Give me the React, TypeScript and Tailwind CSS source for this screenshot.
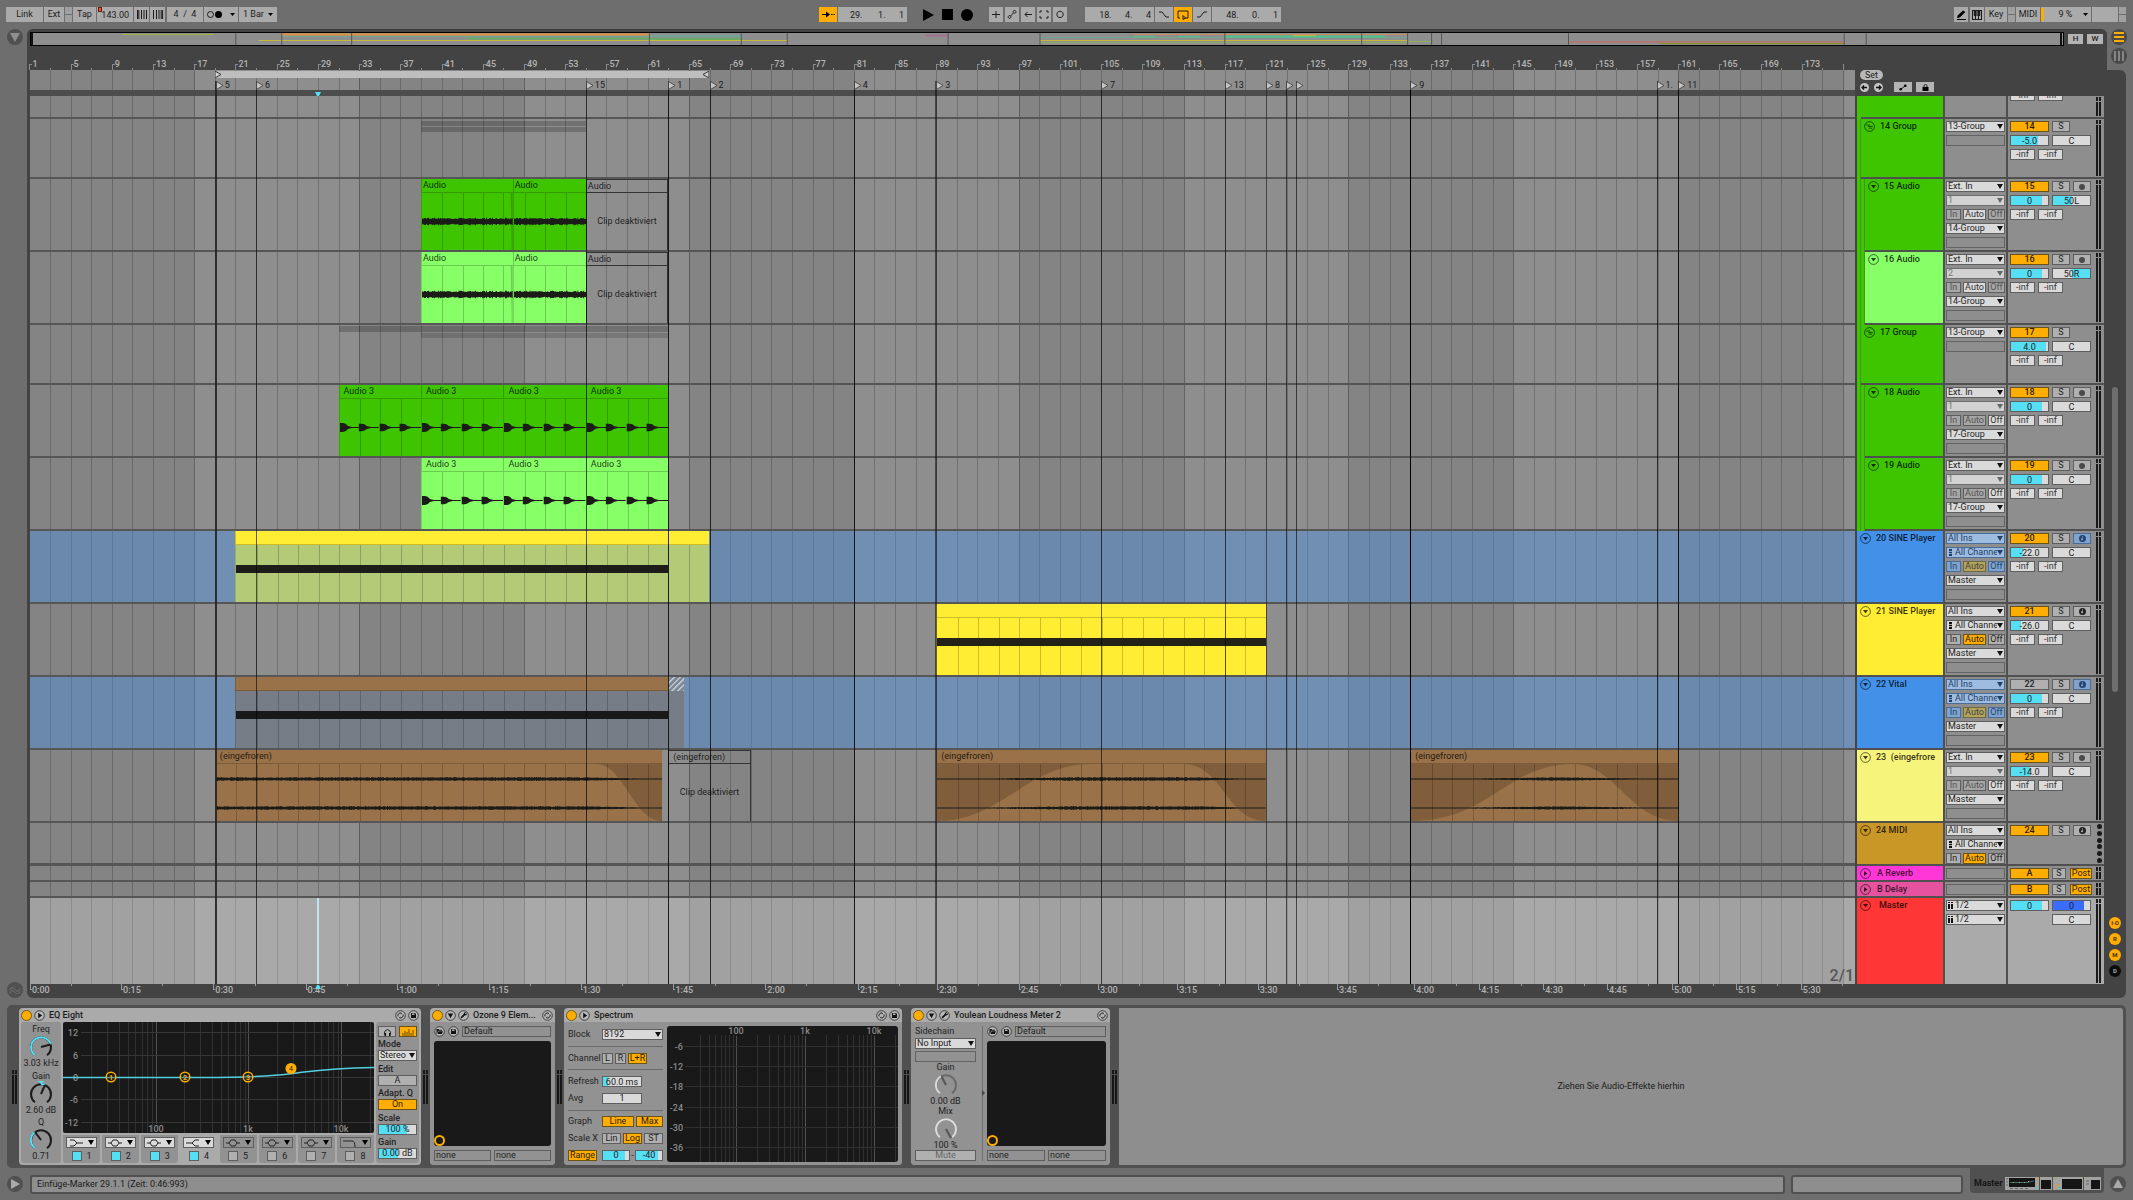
import type { ReactNode } from 'react';
import clsx from 'clsx';

const BARS = 177.1;
const at = (bar: number) => `${((bar - 1.06) / BARS) * 100}%`;
const span = (bars: number) => `${(bars / BARS) * 100}%`;

// the tempo changes along the song, so the seconds are not evenly spaced
const times = [
  { label: '0:00', bar: 1.06 },
  { label: '0:15', bar: 9.9 },
  { label: '0:30', bar: 18.85 },
  { label: '0:45', bar: 27.8 },
  { label: '1:00', bar: 36.7 },
  { label: '1:15', bar: 45.6 },
  { label: '1:30', bar: 54.5 },
  { label: '1:45', bar: 63.5 },
  { label: '2:00', bar: 72.4 },
  { label: '2:15', bar: 81.4 },
  { label: '2:30', bar: 89.1 },
  { label: '2:45', bar: 97 },
  { label: '3:00', bar: 104.7 },
  { label: '3:15', bar: 112.4 },
  { label: '3:30', bar: 120.2 },
  { label: '3:45', bar: 127.9 },
  { label: '4:00', bar: 135.4 },
  { label: '4:15', bar: 141.7 },
  { label: '4:30', bar: 147.9 },
  { label: '4:45', bar: 154.1 },
  { label: '5:00', bar: 160.4 },
  { label: '5:15', bar: 166.6 },
  { label: '5:30', bar: 172.9 },
];

const locators = [
  { bar: 19, label: '5', line: 'w-[2px] bg-[#242424]/90' },
  { bar: 23, label: '6', line: 'w-px bg-black/60' },
  { bar: 55, label: '15', line: 'w-px bg-black/60' },
  { bar: 63, label: '1', line: 'w-px bg-black/80' },
  { bar: 67, label: '2', line: 'w-px bg-black/70' },
  { bar: 81, label: '4', line: 'w-px bg-black/80' },
  { bar: 88.9, label: '3', line: 'w-[2px] bg-black/50' },
  { bar: 105, label: '7', line: 'w-px bg-black/60' },
  { bar: 117, label: '13', line: 'w-px bg-black/60' },
  { bar: 121, label: '8', line: 'w-px bg-black/40' },
  { bar: 122.9, label: '', line: 'w-px bg-black/60' },
  { bar: 123.9, label: '', line: 'w-px bg-black/60' },
  { bar: 135, label: '9', line: 'w-px bg-black' },
  { bar: 158.9, label: '1.', line: 'w-px bg-black/70' },
  { bar: 161, label: '11', line: 'w-px bg-black/80' },
];

type Track = {
  num: string;
  name: string;
  kind: 'group' | 'audio' | 'midi';
  indent: number;
  color: string;
  input: string;
  channel?: string;
  monitor?: 'auto' | 'off' | 'hot' | 'blue';
  output?: string;
  volume?: string;
  level?: number;
  pan?: string;
  panFill?: 'left' | 'right';
  muted?: boolean;
  height: string;
};

const GROUP_H = 'h-[60px]';
const TRACK_H = 'h-[73px]';

const tracks: Track[] = [
  { num: '14', name: '14 Group', kind: 'group', indent: 1, color: 'bg-[#3fc400]', input: '13-Group', volume: '-5.0', level: 72, pan: 'C', height: GROUP_H },
  { num: '15', name: '15 Audio', kind: 'audio', indent: 2, color: 'bg-[#3fc400]', input: 'Ext. In', channel: '1', monitor: 'auto', output: '14-Group', volume: '0', level: 84, pan: '50L', panFill: 'left', height: TRACK_H },
  { num: '16', name: '16 Audio', kind: 'audio', indent: 2, color: 'bg-[#87ff67]', input: 'Ext. In', channel: '2', monitor: 'auto', output: '14-Group', volume: '0', level: 84, pan: '50R', panFill: 'right', height: TRACK_H },
  { num: '17', name: '17 Group', kind: 'group', indent: 1, color: 'bg-[#3fc400]', input: '13-Group', volume: '4.0', level: 95, pan: 'C', height: GROUP_H },
  { num: '18', name: '18 Audio', kind: 'audio', indent: 2, color: 'bg-[#3fc400]', input: 'Ext. In', channel: '1', monitor: 'off', output: '17-Group', volume: '0', level: 84, pan: 'C', height: TRACK_H },
  { num: '19', name: '19 Audio', kind: 'audio', indent: 2, color: 'bg-[#3fc400]', input: 'Ext. In', channel: '1', monitor: 'off', output: '17-Group', volume: '0', level: 84, pan: 'C', height: TRACK_H },
  { num: '20', name: '20 SINE Player', kind: 'midi', indent: 0, color: 'bg-[#4290e8]', input: 'All Ins', channel: 'All Channels', monitor: 'blue', output: 'Master', volume: '-22.0', level: 32, pan: 'C', height: TRACK_H },
  { num: '21', name: '21 SINE Player', kind: 'midi', indent: 0, color: 'bg-[#ffed33]', input: 'All Ins', channel: 'All Channels', monitor: 'hot', output: 'Master', volume: '-26.0', level: 26, pan: 'C', height: TRACK_H },
  { num: '22', name: '22 Vital', kind: 'midi', indent: 0, color: 'bg-[#4290e8]', input: 'All Ins', channel: 'All Channels', monitor: 'blue', output: 'Master', volume: '0', level: 84, pan: 'C', muted: true, height: TRACK_H },
  { num: '23', name: '23  (eingefrore', kind: 'audio', indent: 0, color: 'bg-[#f7f47c]', input: 'Ext. In', channel: '1', monitor: 'off', output: 'Master', volume: '-14.0', level: 50, pan: 'C', height: TRACK_H },
  { num: '24', name: '24 MIDI', kind: 'midi', indent: 0, color: 'bg-[#c99725]', input: 'All Ins', channel: 'All Channels', monitor: 'hot', height: 'h-[43px]' },
];

const noise = (i: number) => {
  const v = Math.sin(i * 12.9898) * 43758.5453;
  return v - Math.floor(v);
};

function wavePath(width: number, mid: number, base: number, extra: number, env: (t: number) => number) {
  let d = '';
  for (let x = 0; x < width; x++) {
    const h = (base + noise(x + mid) * extra) * env(x / width) + 0.4;
    d += `M${x} ${(mid - h).toFixed(1)}h1v${(h * 2).toFixed(1)}h-1z`;
  }
  return d;
}

const hitPath = (x: number, tall: number) =>
  `M${x} ${28.5 - tall}h3q3 0 5 ${tall - 1.6}l4 1.1h8v1h-8l-4 1.1q-2 ${tall - 1.6} -5 ${tall - 1.6}h-3z`;

/* ---------- small controls ---------- */

type ChooserProps = {
  label: string;
  value: string;
  className?: string;
  selectClass?: string;
  arrow?: string;
  rail?: 'midi' | 'stereo';
};

function Chooser({ label, value, className, selectClass, arrow = 'fill-[#111]', rail }: ChooserProps) {
  return (
    <div className={clsx('relative h-[11px]', className)}>
      <select
        aria-label={label}
        className={clsx(
          'block h-full w-full appearance-none overflow-hidden border pr-[7px] text-[9px] leading-[9px] whitespace-nowrap outline-none',
          rail ? 'pl-2' : 'pl-px',
          selectClass ?? 'border-[#5e5e5e] bg-[#dadada] text-[#222]',
        )}
      >
        <option>{value}</option>
      </select>
      {rail === 'midi' && (
        <svg className={clsx('absolute top-[2px] left-[3px] h-[7px] w-[3px]', arrow)} viewBox="0 0 3 7">
          <path d="M0 0h3v2H0zM0 2.7h3v1.6H0zM0 5h3v2H0z" />
        </svg>
      )}
      {rail === 'stereo' && (
        <svg className={clsx('absolute top-[2px] left-[2px] h-[7px] w-[5px]', arrow)} viewBox="0 0 5 7">
          <path d="M0 0h2v1H0zM3 0h2v1H3zM0 2h2v5H0zM3 2h2v5H3z" />
        </svg>
      )}
      <svg className={clsx('absolute top-[3px] right-[2px] h-[5px] w-[6px]', arrow)} viewBox="0 0 6 5">
        <path d="M0 0h6L3 5z" />
      </svg>
    </div>
  );
}

type FieldProps = {
  label: string;
  value: string;
  level?: number;
  fill?: string;
  side?: 'left' | 'right';
  className?: string;
};

function Field({ label, value, level, fill = 'bg-[#55dff5]', side = 'left', className }: FieldProps) {
  return (
    <div className={clsx('relative flex h-[11px] overflow-hidden border border-[#5e5e5e] bg-[#dadada] text-[#222]', side === 'right' && 'justify-end', className)}>
      {level !== undefined && <div className={fill} style={{ width: `${level}%` }} />}
      <input
        aria-label={label}
        defaultValue={value}
        className="absolute inset-0 w-full bg-transparent text-center text-[9px] leading-[9px] outline-none"
      />
    </div>
  );
}

const toggleTones = {
  off: 'border-[#5e5e5e] bg-[#b0b0b0] text-[#222]',
  dim: 'border-[#5e5e5e] bg-[#a6a6a6] text-[#555]',
  light: 'border-[#5e5e5e] bg-[#dadada] text-[#333]',
  on: 'border-[#6b5215] bg-[#ffad00] text-[#2a1d00]',
  blue: 'border-[#4a6d98] bg-[#7fa3cd] text-[#24456f]',
  khaki: 'border-[#6b6a45] bg-[#b5a455] text-[#3b4250]',
};

function Toggle({ children, tone = 'off', className, label }: { children?: ReactNode; tone?: keyof typeof toggleTones; className?: string; label?: string }) {
  return (
    <button
      aria-label={label}
      className={clsx('flex h-[11px] items-center justify-center overflow-hidden border text-[9px] leading-[9px]', toggleTones[tone], className)}
    >
      {children}
    </button>
  );
}

function Blank() {
  return <div className="h-[11px] shrink-0 border border-[#636363]" />;
}

function FoldIcon({ kind }: { kind: 'group' | 'down' | 'right' }) {
  return (
    <svg className="h-[11px] w-[11px] shrink-0" viewBox="0 0 11 11">
      <circle cx="5.5" cy="5.5" r="4.9" fill="none" stroke="#000" strokeOpacity=".65" strokeWidth=".9" />
      {kind === 'down' && <path d="M3 4h5L5.5 7.5z" fillOpacity=".75" />}
      {kind === 'right' && <path d="M4 3v5l3.5-2.5z" fillOpacity=".75" />}
      {kind === 'group' && <path d="M2.2 4h4M4.2 5.5h4.4M4.6 7.2h3.6" fill="none" stroke="#000" strokeOpacity=".65" strokeWidth=".9" />}
    </svg>
  );
}

function ArmIcon({ midi }: { midi: boolean }) {
  return midi ? (
    <svg className="h-[7px] w-[7px]" viewBox="0 0 7 7" fill="currentColor">
      <path fillRule="evenodd" d="M3.5 0a3.5 3.5 0 1 0 0 7a3.5 3.5 0 1 0 0-7zM3.4 1v2.4a1 1 0 1 0 .6 1V1z" />
    </svg>
  ) : (
    <span className="h-[6px] w-[6px] rounded-full bg-[#4a4a4a]" />
  );
}

function Meter({ dots }: { dots?: boolean }) {
  if (dots) {
    return (
      <div className="flex w-[10px] flex-col items-center justify-between py-px">
        {[0, 1, 2, 3, 4, 5].map((i) => (
          <span key={i} className="h-[5px] w-[5px] rounded-full bg-[#1a1a1a]" />
        ))}
      </div>
    );
  }
  return (
    <div className="flex w-[10px] gap-px py-px pl-[2px]">
      {[0, 1].map((i) => (
        <div key={i} className="flex w-[2px] flex-col gap-px">
          <span className="h-1 bg-[#1a1a1a]" />
          <span className="flex-1 bg-[#1a1a1a]" />
        </div>
      ))}
    </div>
  );
}

/* ---------- top bar ---------- */

function BarButton({ children, className, label, on }: { children?: ReactNode; className: string; label?: string; on?: boolean }) {
  return (
    <button
      aria-label={label}
      className={clsx('flex h-[15px] items-center justify-center text-[9px] leading-none text-[#1c1c1c]', on ? 'bg-[#ffad00]' : 'bg-[#aaaaaa]', className)}
    >
      {children}
    </button>
  );
}

function BarInput({ label, value, className }: { label: string; value: string; className: string }) {
  return (
    <input
      aria-label={label}
      defaultValue={value}
      className={clsx('block h-[15px] bg-[#aaaaaa] text-right text-[9px] text-[#1c1c1c] outline-none', className)}
    />
  );
}

function Caret({ className }: { className: string }) {
  return (
    <svg className={className} width="5" height="3" viewBox="0 0 5 3">
      <path d="M0 0h5L2.5 3z" />
    </svg>
  );
}

function Lamps() {
  return (
    <div className="flex h-[15px] w-[7px] flex-col gap-px">
      <span className="flex-1 bg-[#a0a0a0]" />
      <span className="flex-1 bg-[#a0a0a0]" />
    </div>
  );
}

function Glyph({ d, w = 12 }: { d: string; w?: number }) {
  return (
    <svg width={w} height="11" viewBox={`0 0 ${w} 11`} fill="none" stroke="#1c1c1c" strokeWidth="1">
      <path d={d} />
    </svg>
  );
}

function TopBar() {
  return (
    <header className="flex h-[29px] items-center pr-[7px] pl-[6px]">
      <div className="flex flex-1 gap-px">
        <BarButton className="w-[37px]">Link</BarButton>
        <BarButton className="w-[20px]">Ext</BarButton>
        <Lamps />
        <BarButton className="w-[23px]">Tap</BarButton>
        <div className="relative">
          <BarInput label="Tempo" value="143.00" className="w-[36px] pr-1" />
          <span className="absolute top-0 left-[1px] h-[5px] w-[4px] border border-[#5c1f16] bg-[#ff4a32]" />
        </div>
        <BarButton className="w-[15px]" label="Nudge down">
          <Glyph d="M1.5 1v9M2.8 1v9M5.5 1v9M8 1v9M10.5 1v9" />
        </BarButton>
        <BarButton className="mr-px w-[15px]" label="Nudge up">
          <Glyph d="M1.5 1v9M4.5 1v9M7 1v9M9.2 1v9M10.6 1v9" />
        </BarButton>
        <BarButton className="w-[36px] whitespace-pre">4  /  4</BarButton>
        <BarButton className="w-[34px] gap-px" label="Metronome">
          <span className="h-[7px] w-[7px] rounded-full border border-[#1c1c1c]" />
          <span className="h-[7px] w-[7px] rounded-full bg-black" />
          <Caret className="ml-[7px]" />
        </BarButton>
        <div className="relative">
          <select aria-label="Quantization" className="block h-[15px] w-[38px] appearance-none bg-[#aaaaaa] pl-1 text-[9px] text-[#1c1c1c] outline-none">
            <option>1 Bar</option>
          </select>
          <Caret className="absolute top-[6px] right-[4px]" />
        </div>
      </div>

      <div className="mr-8 flex">
        <div className="flex gap-px">
          <BarButton className="w-[18px]" label="Follow" on>
            <svg width="13" height="9" viewBox="0 0 13 9">
              <path d="M0 4h4V1.5L8 4.5 4 7.5V5H0zM9 4h1.6v1H9zM11.5 4H13v1h-1.5z" />
            </svg>
          </BarButton>
          <BarInput label="Position" value="29.       1.      1" className="w-[69px] pr-[3px]" />
        </div>
        <div className="mx-4 flex items-center gap-[8px]">
          <button aria-label="Play">
            <svg width="11" height="12" viewBox="0 0 11 12"><path d="M0 0l11 6-11 6z" /></svg>
          </button>
          <button aria-label="Stop" className="h-[11px] w-[11px] bg-black" />
          <button aria-label="Record" className="h-[12px] w-[12px] rounded-full bg-black" />
        </div>
        <div className="flex gap-[2px]">
          <BarButton className="w-[14px]" label="Overdub"><Glyph d="M6 2v7M2 5.5h8" /></BarButton>
          <BarButton className="w-[14px]" label="Automation arm"><Glyph d="M3.5 6.6a1.4 1.4 0 1 0 .1 0zM8.5 1.4a1.4 1.4 0 1 0 .1 0zM4.5 7l3-3" /></BarButton>
          <BarButton className="w-[14px]" label="Re-enable automation"><Glyph d="M10 5.5H3M5.5 3L3 5.5 5.5 8" /></BarButton>
          <BarButton className="w-[14px]" label="Capture"><Glyph d="M2 4V2h2M8 2h2v2M10 7v2H8M4 9H2V7" /></BarButton>
          <BarButton className="w-[14px]" label="Session record"><Glyph d="M6 2.2a3.2 3.2 0 1 0 .1 0z" /></BarButton>
        </div>
        <div className="ml-[18px] flex gap-px">
          <BarInput label="Loop start" value="18.      4.      4" className="w-[69px] pr-[3px]" />
          <BarButton className="w-[18px]" label="Punch in"><Glyph d="M1 3h3l4 5h3" /></BarButton>
          <BarButton className="w-[18px]" label="Loop" on><Glyph w={14} d="M4 9H2V2h10v7H9M7 6.5L9.5 9 7 10.6z" /></BarButton>
          <BarButton className="w-[18px]" label="Punch out"><Glyph d="M1 8h3l4-5h3" /></BarButton>
          <BarInput label="Loop length" value="48.      0.      1" className="w-[69px] pr-[3px]" />
        </div>
      </div>

      <div className="flex flex-1 justify-end gap-px">
        <BarButton className="mr-px w-[14px]" label="Draw mode">
          <svg width="9" height="10" viewBox="0 0 9 10"><path d="M0 9h9v1H0zM0 8l.6-2.4L6 .4 8.4 2 2.8 7.5z" /></svg>
        </BarButton>
        <BarButton className="w-[14px]" label="Computer keyboard">
          <svg width="10" height="10" viewBox="0 0 10 10">
            <path fill="#1c1c1c" d="M0 0h10v10H0z" />
            <path d="M1 6h2v3H1zM4 6h2v3H4zM7 6h2v3H7zM1 1h.8v5H1zM4 1h.4v5H4zM5.6 1h.4v5h-.4zM8.200 1H9v5h-.8z" fill="#aaa" />
          </svg>
        </BarButton>
        <BarButton className="w-[22px]">Key</BarButton>
        <Lamps />
        <BarButton className="w-[24px]">MIDI</BarButton>
        <div className="flex h-[15px] w-[50px] items-center bg-[#aaaaaa] text-[9px] text-[#1c1c1c]">
          <span className="h-[13px] w-[3px] bg-[#ffad00]" />
          <span className="flex-1 pl-1 text-center">9 %</span>
          <Caret className="mr-[3px]" />
        </div>
        <span className="h-[15px] w-[26px] bg-[#aaaaaa]" />
        <Lamps />
      </div>
    </header>
  );
}

/* ---------- arrangement ---------- */

function Overview() {
  const marks = [235, 281, 351, 649, 741, 787, 948, 1040, 1225, 1362, 1408, 1432, 1442, 1569, 1845, 1867];
  return (
    <div className="h-[14px] flex-1 border border-black bg-[#8e8e8e]">
      <svg className="block h-full w-full" viewBox="30 33 2034 12" preserveAspectRatio="none">
        <path d="M121 34.5h92" stroke="#98b23a" />
        <path d="M281 34.5h368" stroke="#e0913f" strokeWidth="2" />
        <path d="M1133 34.5h275" stroke="#c98a5c" />
        <path d="M281 36.5h461M649 35.5h93M1040 37.5h368" stroke="#6fa694" />
        <path d="M466 38.5h183M649 39h92" stroke="#5fb55a" strokeWidth="1.5" />
        <path d="M258 40.5h529M1040 40.5h368" stroke="#c8b838" />
        <path d="M1040 42.5h368M1408 41.5h24" stroke="#8fb05f" />
        <path d="M1225 36.5h160" stroke="#4fc48c" strokeWidth="2" />
        <path d="M1133 36.5h22M1178 36.5h23" stroke="#55c08c" />
        <path d="M1293 35.5h23" stroke="#c9b34b" />
        <path d="M925 35.5h23" stroke="#a0708f" strokeWidth="2" />
        <path d="M1569 42h276" stroke="#d0655c" />
        <path d="M1661 43.5h184" stroke="#7f9a20" />
        <path d={marks.map((m) => `M${m} 33v12`).join('')} stroke="#555" />
        <path d="M31 33v12M2062 33v12" stroke="#111" strokeWidth="2" />
      </svg>
    </div>
  );
}

function Ruler() {
  const labels = Array.from({ length: 44 }, (_, i) => 1 + i * 4);
  return (
    <div className="relative mr-[252px] h-6 text-[9px] font-medium text-[#b4b4b4]">
      {labels.map((bar) => (
        <div key={bar} className="absolute bottom-0 flex h-[11px] items-start" style={{ left: at(bar) }}>
          <span className="mt-[5px] h-[6px] w-[3px] border-t border-l border-[#8a8a8a]" />
          <span className="leading-[11px]">{bar}</span>
        </div>
      ))}
      {labels.map((bar) => (
        <span key={bar} className="absolute bottom-0 h-[2px] w-px bg-[#8a8a8a]" style={{ left: at(bar + 2) }} />
      ))}
      <span className="absolute bottom-0 h-[6px] w-px bg-[#8a8a8a]" style={{ left: at(177) }} />
    </div>
  );
}

function GridBackdrop() {
  const darkBlocks = [0, 2, 4, 6, 8, 10];
  const lines = Array.from({ length: 88 }, (_, i) => 3 + i * 2);
  return (
    <div className="absolute inset-0 overflow-hidden bg-[#8e8e8e]">
      {darkBlocks.map((i) => (
        <div key={i} className="absolute inset-y-0 bg-[#848484]" style={{ left: at(1 + i * 16), width: span(16) }} />
      ))}
      {lines.map((bar) => (
        <div key={bar} className={clsx('absolute inset-y-0 w-px', bar % 16 === 1 ? 'bg-black/30' : 'bg-black/20')} style={{ left: at(bar) }} />
      ))}
    </div>
  );
}

type ClipProps = {
  start: number;
  end: number;
  name?: string;
  head: string;
  body: string;
  wide?: boolean;
  children?: ReactNode;
};

function Clip({ start, end, name, head, body, wide, children }: ClipProps) {
  const lines: number[] = [];
  for (let b = Math.floor(start) + 1; b < end; b++) if (b % 2 === 1) lines.push(b);
  return (
    <div className="absolute inset-y-0 flex flex-col overflow-hidden" style={{ left: at(start), width: span(end - start) }}>
      <div className={clsx('h-[14px] shrink-0 border-b border-l border-black/20 text-[9px] leading-[13px] whitespace-nowrap text-black/80', wide ? 'pl-1' : 'pl-px', head)}>{name}</div>
      <div className={clsx('relative flex-1 border-l border-black/15', body)}>
        {lines.map((b) => (
          <span key={b} className="absolute inset-y-0 w-px bg-black/20" style={{ left: `${((b - start) / (end - start)) * 100}%` }} />
        ))}
        {children}
      </div>
    </div>
  );
}

function MutedClip({ start, end, name, wide }: { start: number; end: number; name: string; wide?: boolean }) {
  return (
    <div className="absolute inset-y-0 flex flex-col border-t border-r border-l border-[#333] text-[9px] text-black/80" style={{ left: at(start), width: span(end - start) }}>
      <div className={clsx('h-[13px] shrink-0 border-b border-[#333] leading-[12px]', wide ? 'pl-1' : 'pl-px')}>{name}</div>
      <div className="flex flex-1 items-center justify-center whitespace-nowrap">Clip deaktiviert</div>
    </div>
  );
}

function Wave({ width, path, children }: { width: number; path: string; children?: ReactNode }) {
  return (
    <svg className="absolute inset-0 h-full w-full" viewBox={`0 0 ${width} 57`} preserveAspectRatio="none">
      {children}
      <path d={path} fill="#1b1b17" />
    </svg>
  );
}

function AudioPair({ color }: { color: string }) {
  const flat = () => 1;
  return (
    <>
      <Clip start={39} end={47.9} name="Audio" head={color} body={color}>
        <Wave width={92} path={wavePath(92, 28.5, 1.9, 1.5, flat)}>
          <path d="M90 0h2v57h-1z" fillOpacity=".2" />
        </Wave>
      </Clip>
      <Clip start={47.9} end={55} name="Audio" head={color} body={color}>
        <Wave width={74} path={wavePath(74, 28.5, 1.9, 1.5, flat)} />
      </Clip>
      <MutedClip start={55} end={63} name="Audio" />
    </>
  );
}

function Hits({ color, starts }: { color: string; starts: number[] }) {
  return (
    <>
      {starts.map((s) => (
        <Clip key={s} start={s} end={s + 8} name="Audio 3" head={color} body={color} wide>
          <Wave width={82} path={[0, 19, 40, 60].map((x, i) => hitPath(x, i === 0 ? 4.5 : 3.7)).join('') + 'M60 28h22v1H60z'} />
        </Clip>
      ))}
    </>
  );
}

const brown = 'bg-[#9a7249]';

function frozenPath(width: number, env: (t: number) => number) {
  return wavePath(width, 15, 0.7, 0.8, env) + wavePath(width, 44, 0.7, 0.8, env);
}

function Lane({ height, tint, children }: { height: string; tint?: string; children?: ReactNode }) {
  return (
    <div className={clsx('border-b-2 border-[#565656]', height)}>
      <div className={clsx('relative h-full', tint)}>{children}</div>
    </div>
  );
}

function Lanes() {
  const green = 'bg-[#3fc400]';
  const lime = 'bg-[#87ff67]';
  const yellow = 'bg-[#ffed33]';
  return (
    <>
      <Lane height="h-[23px]" />
      <Lane height={GROUP_H}>
        <div className="absolute top-[2px] h-[5px] bg-black/20" style={{ left: at(39), width: span(16) }} />
        <div className="absolute top-[8px] h-[5px] bg-black/20" style={{ left: at(39), width: span(16) }} />
      </Lane>
      <Lane height={TRACK_H}><AudioPair color={green} /></Lane>
      <Lane height={TRACK_H}><AudioPair color={lime} /></Lane>
      <Lane height={GROUP_H}>
        <div className="absolute top-[1px] h-[6px] bg-black/20" style={{ left: at(31), width: span(32) }} />
        <div className="absolute top-[8px] h-[5px] bg-black/15" style={{ left: at(39), width: span(24) }} />
      </Lane>
      <Lane height={TRACK_H}><Hits color={green} starts={[31, 39, 47, 55]} /></Lane>
      <Lane height={TRACK_H}><Hits color={lime} starts={[39, 47, 55]} /></Lane>
      <Lane height={TRACK_H} tint="bg-[#4691e8]/40">
        <Clip start={21} end={67} head={yellow} body="bg-[#b3ca76]">
          <span className="absolute top-[20px] left-0 h-2 bg-[#1d1d1a]" style={{ width: `${(42 / 46) * 100}%` }} />
        </Clip>
      </Lane>
      <Lane height={TRACK_H}>
        <Clip start={89} end={121} head={yellow} body={yellow}>
          <span className="absolute top-[20px] left-0 h-2 w-full bg-[#222218]" />
        </Clip>
      </Lane>
      <Lane height={TRACK_H} tint="bg-[#4691e8]/40">
        <Clip start={21} end={63} head={brown} body="bg-[#767d87]">
          <span className="absolute top-[20px] left-0 h-2 w-full bg-[#191919]" />
        </Clip>
        <div className="absolute inset-y-0 flex flex-col" style={{ left: at(63), width: span(1.5) }}>
          <div className="h-[14px] bg-[repeating-linear-gradient(135deg,#b8c4d0_0px,#b8c4d0_1px,#7d8792_2px,#7d8792_4px)]" />
          <div className="flex-1 bg-[#767d87]" />
        </div>
      </Lane>
      <Lane height={TRACK_H}>
        <Clip start={19} end={62.4} name="(eingefroren)" head={brown} body={brown} wide>
          <Wave width={449} path={frozenPath(449, (t) => (t < 0.85 ? 1 : Math.max(0.05, (1 - t) / 0.15 - 0.2)))}>
            <path d="M383 0C410 0 420 57 449 57V0z" fillOpacity=".17" />
          </Wave>
        </Clip>
        <MutedClip start={63} end={71} name="(eingefroren)" wide />
        <Clip start={89} end={121} name="(eingefroren)" head={brown} body={brown} wide>
          <Wave width={329} path={frozenPath(329, (t) => (t < 0.4 ? (t / 0.4) ** 2 : t > 0.8 ? ((1 - t) / 0.2) ** 2 : 1))}>
            <path d="M0 57C65 57 90 0 155 0H0zM247 0C285 0 290 57 329 57V0z" fillOpacity=".17" />
          </Wave>
        </Clip>
        <Clip start={135} end={161} name="(eingefroren)" head={brown} body={brown} wide>
          <Wave width={268} path={frozenPath(268, (t) => (t < 0.55 ? (t / 0.55) ** 2 : ((1 - t) / 0.45) ** 1.5))}>
            <path d="M0 57C80 57 95 0 163 0H0zM163 0C205 0 220 57 268 57V0z" fillOpacity=".17" />
          </Wave>
        </Clip>
      </Lane>
      <div className="h-[43px] border-b-[3px] border-[#565656]" />
      <div className="h-4 border-b-2 border-[#565656]" />
      <div className="h-4 border-b-2 border-[#565656]" />
      <div className="relative flex h-[86px] items-end justify-end bg-white/24 pr-px">
        <span className="absolute inset-y-0 w-[2px] bg-[#bfe6ee]" style={{ left: at(28.9) }} />
        <span className="text-[16px] leading-4 font-medium text-[#555]">2/1</span>
      </div>
    </>
  );
}

function Timeline() {
  return (
    <div className="min-w-0 flex-1">
      <div className="relative">
        <GridBackdrop />
        <div className="relative h-5">
          <div className="absolute top-px flex h-[7px] justify-between bg-[#bebebe]" style={{ left: at(19), width: span(48) }}>
            <svg width="7" height="7" viewBox="0 0 7 7"><path d="M0 0l6 3.5L0 7z" fill="#d0d0d0" stroke="#333" /></svg>
            <svg width="7" height="7" viewBox="0 0 7 7"><path d="M7 0L1 3.5 7 7z" fill="#d0d0d0" stroke="#333" /></svg>
          </div>
        </div>
        <div className="relative h-[6px] bg-[#4d4d4d]">
          <svg className="absolute top-[2px] -ml-[3px]" style={{ left: at(29) }} width="6" height="4" viewBox="0 0 6 4"><path d="M0 0h6L4 4H2z" fill="#55dff5" /></svg>
        </div>
        <div className="relative"><Lanes /></div>
        <div className="pointer-events-none absolute inset-x-0 top-[11px] bottom-0">
          {locators.map((l) => (
            <div key={l.bar} className="absolute inset-y-0 flex" style={{ left: at(l.bar) }}>
              <span className={clsx('h-full', l.line)} />
              <svg className="-ml-px h-[9px] w-[8px]" viewBox="0 0 8 9"><path d="M.5.5l6.500 4-6.500 4z" fill="#c4c4c4" stroke="#3a3a3a" strokeWidth=".8" /></svg>
              <span className="h-[9px] pl-px text-[9px] leading-[9px] text-[#1c1c1c]">{l.label}</span>
            </div>
          ))}
        </div>
      </div>
      <div className="relative h-[14px] text-[9px] font-medium text-[#b4b4b4]">
        {times.map((t) => (
          <div key={t.label} className="absolute top-0 flex" style={{ left: at(t.bar) }}>
            <span className="h-[6px] w-[2px] border-b border-l border-[#9a9a9a]" />
            <span className="leading-[12px]">{t.label}</span>
          </div>
        ))}
        {times.map((t) => (
          <span key={t.label} className="absolute top-0 h-[2px] w-px bg-[#9a9a9a]" style={{ left: at(t.bar + 4) }} />
        ))}
        <svg className="absolute top-px -ml-[3px]" style={{ left: at(29) }} width="6" height="4" viewBox="0 0 6 4"><path d="M0 4h6L4 0H2z" fill="#55dff5" /></svg>
      </div>
    </div>
  );
}

/* ---------- track headers ---------- */

function NameCell({ track }: { track: Track }) {
  return (
    <div className="flex w-[86px] overflow-hidden">
      {track.indent >= 1 && <div className="w-1 shrink-0 border-r border-[#3d9a14] bg-[#3fc400]" />}
      {track.indent >= 2 && <div className="w-1 shrink-0 border-r border-[#3d9a14] bg-[#3fc400]" />}
      <div className={clsx('flex flex-1 gap-[5px] overflow-hidden border-b-2 border-[#505050] pt-[2px] pl-[3px] text-[9px] leading-[11px] font-medium whitespace-pre text-black/80', track.color)}>
        <FoldIcon kind={track.kind === 'group' ? 'group' : 'down'} />
        {track.name}
      </div>
    </div>
  );
}

function IoCell({ track }: { track: Track }) {
  const blue = track.monitor === 'blue';
  const blueSelect = 'border-[#4a6d98] bg-[#9dbce0] text-[#1f4068]';
  const dead = track.kind === 'audio';
  return (
    <div className="flex w-[61px] flex-col gap-[3px] overflow-hidden border-b-2 border-[#505050] bg-[#8e8e8e] px-px pt-[2px]">
      <Chooser label={`${track.name} input`} value={track.input} selectClass={blue ? blueSelect : undefined} arrow={blue ? 'fill-[#1f4068]' : undefined} />
      {track.channel ? (
        <>
          <Chooser
            label={`${track.name} channel`}
            value={track.channel}
            rail={track.kind === 'midi' ? 'midi' : undefined}
            selectClass={blue ? blueSelect : dead ? 'border-[#6e6e6e] bg-[#d2d2d2] text-[#777]' : undefined}
            arrow={blue ? 'fill-[#1f4068]' : dead ? 'fill-[#666]' : undefined}
          />
          <div className="flex shrink-0 gap-[2px]">
            <Toggle className="w-[15px]" tone={blue ? 'blue' : dead ? 'dim' : 'off'}>In</Toggle>
            <Toggle className="w-[23px]" tone={blue ? 'khaki' : track.monitor === 'hot' ? 'on' : track.monitor === 'auto' ? 'light' : 'dim'}>Auto</Toggle>
            <Toggle className="w-[17px]" tone={blue ? 'blue' : track.monitor === 'off' ? 'light' : track.monitor === 'hot' ? 'off' : 'dim'}>Off</Toggle>
          </div>
          {track.output && <Chooser label={`${track.name} output`} value={track.output} />}
          {track.output && <Blank />}
        </>
      ) : (
        <Blank />
      )}
    </div>
  );
}

function MixCell({ track }: { track: Track }) {
  return (
    <div className="flex flex-1 border-b-2 border-[#505050] bg-[#8e8e8e] pl-[2px]">
      <div className="flex flex-1 flex-col gap-[3px] overflow-hidden pt-[2px]">
        <div className="flex gap-[3px]">
          <Toggle className="w-[39px] font-medium" tone={track.muted ? 'off' : 'on'}>{track.num}</Toggle>
          <Toggle className="w-[18px]">S</Toggle>
          {track.kind !== 'group' && (
            <Toggle className="w-[18px]" label="Arm" tone={track.monitor === 'blue' ? 'blue' : 'off'}>
              <ArmIcon midi={track.kind === 'midi'} />
            </Toggle>
          )}
        </div>
        {track.volume && (
          <>
            <div className="flex gap-[3px]">
              <Field className="w-[39px]" label={`${track.name} volume`} value={track.volume} level={track.level} />
              <Field className="w-[39px]" label={`${track.name} pan`} value={track.pan ?? ''} level={track.panFill ? 50 : undefined} side={track.panFill ?? 'left'} />
            </div>
            <div className="flex gap-[3px]">
              <Toggle className="w-[25px]" tone="light">-inf</Toggle>
              <Toggle className="w-[25px]" tone="light">-inf</Toggle>
            </div>
          </>
        )}
      </div>
      <Meter dots={track.num === '24'} />
    </div>
  );
}

function ReturnRow({ letter, name, color }: { letter: string; name: string; color: string }) {
  return (
    <div className="flex h-4 gap-[2px]">
      <div className={clsx('flex w-[86px] items-center gap-[6px] border-b-2 border-[#505050] pl-[3px] text-[9px] leading-none font-medium text-black/75', color)}>
        <FoldIcon kind="right" />
        {letter} {name}
      </div>
      <div className="w-[61px] border-b-2 border-[#505050] bg-[#8e8e8e] px-px pt-[2px]"><Blank /></div>
      <div className="flex flex-1 border-b-2 border-[#505050] bg-[#8e8e8e] pl-[2px]">
        <div className="flex flex-1 pt-[2px]">
          <Toggle className="mr-[3px] w-[39px] font-medium" tone="on">{letter}</Toggle>
          <Toggle className="mr-1 w-[14px]">S</Toggle>
          <Toggle className="w-[22px]" tone="on">Post</Toggle>
        </div>
        <Meter />
      </div>
    </div>
  );
}

function TrackHeaders() {
  return (
    <div className="flex w-[249px] flex-col bg-[#434343] pl-[2px]">
      <div className="flex h-[26px] flex-col gap-[2px] pl-[3px]">
        <button className="h-[10px] w-[23px] rounded-full bg-[#b8b8b8] text-[9px] leading-[10px] text-[#222]">Set</button>
        <div className="flex items-center">
          {['M7 4.5H2.200M4 2.500L2 4.500l2 2', 'M2 4.500h4.800M5 2.500l2 2-2 2'].map((d, i) => (
            <button key={d} aria-label={i ? 'Next locator' : 'Previous locator'} className="mr-[5px] h-[9px] w-[9px] rounded-full bg-[#c4c4c4]">
              <svg width="9" height="9" viewBox="0 0 9 9"><path d={d} fill="none" stroke="#111" strokeWidth="1.300" /></svg>
            </button>
          ))}
          <button aria-label="Automation mode" className="ml-[6px] flex h-[10px] w-[18px] items-center justify-center bg-[#b4b4b4]">
            <svg width="8" height="7" viewBox="0 0 8 7"><path d="M1 6l6-5" stroke="#111" /><circle cx="1.7" cy="5.3" r="1.3" /><circle cx="6.3" cy="1.7" r="1.3" /></svg>
          </button>
          <button aria-label="Lock envelopes" className="ml-1 flex h-[10px] w-[18px] items-center justify-center bg-[#b4b4b4]">
            <svg width="7" height="7" viewBox="0 0 7 7"><path d="M.5 3h6v4h-6z" /><path d="M2 3V2a1.5 1.5 0 0 1 3 0v1" fill="none" stroke="#111" strokeWidth=".9" /></svg>
          </button>
        </div>
      </div>

      <div className="bg-[#505050]">
        <div className="flex h-[23px] gap-[2px]">
          <div className="flex w-[86px] bg-[#3fc400]">
            <div className="w-1" />
            <div className="flex-1 border-b-2 border-[#505050]" />
          </div>
          <div className="w-[61px] border-b-2 border-[#505050] bg-[#8e8e8e]" />
          <div className="flex flex-1 overflow-hidden border-b-2 border-[#505050] bg-[#8e8e8e] pl-[2px]">
            <div className="-mt-[6px] flex flex-1 items-start gap-[3px]">
              <Toggle className="w-[25px]" tone="light">-inf</Toggle>
              <Toggle className="w-[25px]" tone="light">-inf</Toggle>
            </div>
            <Meter />
          </div>
        </div>

        {tracks.map((track) => (
          <div key={track.num} className={clsx('flex gap-[2px]', track.height)}>
            <NameCell track={track} />
            <IoCell track={track} />
            <MixCell track={track} />
          </div>
        ))}

        <ReturnRow letter="A" name="Reverb" color="bg-[#ff37d6]" />
        <ReturnRow letter="B" name="Delay" color="bg-[#e5539f]" />

        <div className="flex h-[86px] gap-[2px]">
          <div className="flex w-[86px] gap-2 bg-[#ff3636] pt-[2px] pl-[3px] text-[9px] leading-[11px] font-medium text-black/80">
            <FoldIcon kind="down" />
            Master
          </div>
          <div className="flex w-[61px] flex-col gap-[3px] bg-[#aaaaaa] px-px pt-[2px]">
            <Chooser label="Cue out" value="1/2" rail="stereo" />
            <Chooser label="Master out" value="1/2" rail="stereo" />
          </div>
          <div className="flex flex-1 bg-[#aaaaaa] pl-[2px]">
            <div className="flex flex-1 flex-col gap-[3px] pt-[2px]">
              <div className="flex gap-[3px]">
                <Field className="w-[39px]" label="Master volume" value="0" level={84} />
                <Field className="w-[39px]" label="Cue volume" value="0" level={84} fill="bg-[#3a6cff]" />
              </div>
              <Field className="ml-[42px] w-[39px]" label="Master pan" value="C" />
            </div>
            <Meter />
          </div>
        </div>
      </div>
    </div>
  );
}

function Arrangement() {
  return (
    <main className="flex">
      <div className="flex w-[27px] flex-col items-center justify-between pl-[2px]">
        <button aria-label="Show browser" className="flex h-4 w-4 items-center justify-center rounded-full bg-[#505050]">
          <svg width="10" height="11" viewBox="0 0 10 11"><path d="M0 1h10L5 10z" fill="#8e8e8e" /></svg>
        </button>
        <button aria-label="Groove pool" className="flex h-4 w-4 items-center justify-center rounded-full bg-[#505050]">
          <svg width="12" height="8" viewBox="0 0 12 8" fill="none" stroke="#7a7a7a"><path d="M1 4c1-3 3-3 5-.5s4 2 5-1M1 7c1-3 3-3 5-.5s4 2 5-1" /></svg>
        </button>
      </div>

      <div className="min-w-0 flex-1">
        <div className="flex">
          <div className="min-w-0 flex-1 rounded-t-md border-t border-[#3b3b3b] bg-[#434343] pl-[3px]">
            <div className="flex items-center gap-1 pt-[2px] pr-1">
              <Overview />
              <button className="h-[10px] w-[15px] bg-[#b4b4b4] text-[8px] leading-[10px] font-medium text-[#222]">H</button>
              <button className="h-[10px] w-[16px] bg-[#b4b4b4] text-[8px] leading-[10px] font-medium text-[#222]">W</button>
            </div>
            <Ruler />
          </div>
          <div className="flex w-[26px] flex-col gap-[3px] pl-[4px]">
            <button aria-label="Arrangement view" className="flex h-4 w-4 items-center justify-center rounded-full bg-[#4a4a4a]">
              <svg width="10" height="10" viewBox="0 0 10 10"><path d="M0 1h10M0 5h10M0 9h10" stroke="#ffad00" strokeWidth="2" /></svg>
            </button>
            <button aria-label="Session view" className="flex h-4 w-4 items-center justify-center rounded-full bg-[#4a4a4a]">
              <svg width="10" height="10" viewBox="0 0 10 10"><path d="M1 0v10M5 0v10M9 0v10" stroke="#999" strokeWidth="1.500" /></svg>
            </button>
          </div>
        </div>

        <div className="mr-[7px] flex rounded-tr-md rounded-b-md bg-[#434343] pl-[3px]">
          <Timeline />
          <TrackHeaders />
          <div className="flex w-[22px] flex-col items-center pb-[21px]">
            <div className="mt-[317px] h-[305px] w-[6px] rounded-full bg-[#6e6e6e]" />
            <div className="mt-auto flex flex-col gap-1">
              {['I·O', 'R', 'M'].map((l) => (
                <button key={l} className="h-3 w-3 rounded-full bg-[#ffad00] text-[6px] leading-3 font-bold text-[#4a3200]">{l}</button>
              ))}
              <button className="h-3 w-3 rounded-full bg-[#0c0c0c] text-[6px] leading-3 font-bold text-[#aaa]">D</button>
            </div>
          </div>
        </div>
      </div>
    </main>
  );
}

/* ---------- devices ---------- */

function DeviceMeter() {
  return (
    <div className="flex w-[9px] shrink-0 items-center justify-center gap-px">
      {[0, 1].map((i) => (
        <div key={i} className="flex h-[34px] w-[2px] flex-col gap-px">
          <span className="h-1 bg-[#161616]" />
          <span className="flex-1 bg-[#161616]" />
        </div>
      ))}
    </div>
  );
}

const deviceIcons = {
  play: 'M4.2 2.800v5.400l4-2.700z',
  fold: 'M2.8 3.500h5.400l-2.700 4.700z',
  wrench: 'M2.5 7.300l3.200-3.200a2 2 0 0 1 2.500-2L7 3.400l.8.800 1.200-1.100a2 2 0 0 1-2.200 2.300L3.700 8.500z',
  save: 'M3 3h4l1 1v4H3zM4 3.500v1.500h2.500V3.500z',
  folder: 'M2.5 3h2l.6.800H8v1H4.200L3 7.800h-.5zM4.600 5.300h4.400L7.800 8H3.500z',
  swap: 'M3 6.500a2.600 2.600 0 0 1 3.500-3.300L6 4.200M8 4.500a2.600 2.600 0 0 1-3.500 3.300l.6-1',
};

function DeviceIcon({ icon, label }: { icon: keyof typeof deviceIcons; label: string }) {
  const line = icon === 'swap';
  return (
    <button aria-label={label} className="h-[11px] w-[11px] shrink-0">
      <svg width="11" height="11" viewBox="0 0 11 11">
        <circle cx="5.5" cy="5.5" r="4.8" fill="#b8b8b8" stroke="#333" strokeWidth=".9" />
        <path d={deviceIcons[icon]} fill={line ? 'none' : '#111'} stroke={line ? '#222' : 'none'} fillRule="evenodd" />
      </svg>
    </button>
  );
}

function Device({ title, width, left, right, children }: { title: string; width: string; left: ReactNode; right: ReactNode; children: ReactNode }) {
  return (
    <section className={clsx('flex h-[157px] shrink-0 flex-col overflow-hidden rounded-[4px] bg-[#aaaaaa]', width)}>
      <div className="flex h-[14px] shrink-0 items-center gap-[2px] px-[2px] text-[9px] text-[#1c1c1c]">
        <button aria-label={`${title} on`} className="h-[11px] w-[11px] shrink-0 rounded-full border border-[#7a5a10] bg-[#ffad00]" />
        {left}
        <h2 className="min-w-0 flex-1 pl-[2px] font-medium whitespace-nowrap">{title}</h2>
        {right}
      </div>
      {children}
    </section>
  );
}

type KnobProps = {
  label: string;
  value: string;
  arc: string;
  needle: string;
  grey?: boolean;
  marker?: boolean;
};

function Knob({ label, value, arc, needle, grey, marker }: KnobProps) {
  return (
    <div className="flex flex-col items-center text-[9px] leading-[10px] text-[#222]">
      <span>{label}</span>
      <svg width="26" height="24" viewBox="0 0 26 24" fill="none" strokeWidth="2">
        <path d="M7 21.200A10 10 0 1 1 19 21.200" stroke={grey ? '#6a6a6a' : '#1c1c1c'} />
        <path d={arc} stroke={grey ? '#dadada' : '#55dff5'} />
        <path d={needle} stroke={grey ? '#555' : '#1c1c1c'} />
        {marker && <path d="M10 0h6l-3 3z" fill="#55dff5" />}
      </svg>
      <span>{value}</span>
    </div>
  );
}

function logLines(first: number, decade: number, width: number, from: number) {
  const xs: number[] = [];
  for (let p = -1; p <= 2; p++) {
    for (let n = 2; n <= 9; n++) {
      const x = first + decade * (Math.log10(n) + p);
      if (x > from && x < width) xs.push(Math.round(x) + 0.5);
    }
  }
  return xs;
}

function EqGraph() {
  const nodes = [
    { n: 1, x: 48 },
    { n: 2, x: 122 },
    { n: 3, x: 185 },
  ];
  return (
    <svg className="block h-[111px] w-full rounded-[2px] bg-[#191919]" viewBox="0 0 311 111" preserveAspectRatio="none">
      <path d={logLines(93, 93, 311, 26).map((x) => `M${x} 0v111`).join('')} stroke="#303030" />
      <path d="M93.5 0v102M185.5 0v102M278.5 0v102" stroke="#505050" />
      <path d="M18 10.5h293M18 33.5h293M18 55.5h293M18 77.5h293M18 100.5h293" stroke="#363636" />
      <g fill="#8a8a8a" fontSize="9" fontWeight="500" textAnchor="end">
        <text x="15" y="14">12</text>
        <text x="15" y="37">6</text>
        <text x="15" y="59">0</text>
        <text x="15" y="81">-6</text>
        <text x="15" y="104">-12</text>
      </g>
      <g fill="#8a8a8a" fontSize="9" fontWeight="500" textAnchor="middle">
        <text x="93" y="110">100</text>
        <text x="185" y="110">1k</text>
        <text x="278" y="110">10k</text>
      </g>
      <path d="M0 55.5H140C185 55.5 210 54 230 51.5S265 46 311 45.5" fill="none" stroke="#55cfe0" strokeWidth="1.5" />
      {nodes.map((p) => (
        <g key={p.n}>
          <circle cx={p.x} cy="55" r="4.8" fill="#191919" fillOpacity=".3" stroke="#ffad00" strokeWidth="1.4" />
          <text x={p.x} y="57.5" fontSize="7" fontWeight="700" textAnchor="middle" fill="#ffad00">{p.n}</text>
        </g>
      ))}
      <circle cx="228" cy="46.5" r="5.5" fill="#ffad00" />
      <text x="228" y="49" fontSize="7" textAnchor="middle" fill="#222">4</text>
    </svg>
  );
}

const bell = 'M0 5h3l2-3h4l2 3h3M3 5l2 3h4l2-3';
const filterShapes = ['M1 2h4l3 3h6M1 8h4l3-3', bell, bell, 'M0 5h6l3-3h4M6 5l3 3h4', bell, bell, bell, 'M0 3h9q3 0 3 6'];

function FilterTab({ index }: { index: number }) {
  const on = index < 4;
  return (
    <div className={clsx('flex flex-1 flex-col items-center gap-[3px] rounded-b-[3px] pt-[2px]', index === 3 ? 'bg-[#aaaaaa]' : 'bg-[#929292]')}>
      <button aria-label={`Filter ${index + 1} type`} className={clsx('flex h-[11px] w-[31px] items-center justify-between border border-[#5e5e5e] px-[2px]', on ? 'bg-[#dadada]' : 'bg-[#929292]')}>
        <svg width="14" height="10" viewBox="0 0 14 10" fill="none" stroke="#222"><path d={filterShapes[index]} /></svg>
        <svg width="6" height="5" viewBox="0 0 6 5"><path d="M0 0h6L3 5z" /></svg>
      </button>
      <label className="flex items-center gap-[5px] text-[9px] leading-[10px] text-[#222]">
        <input type="checkbox" defaultChecked={on} className="h-[10px] w-[10px] appearance-none border border-[#5e5e5e] bg-[#b0b0b0] checked:bg-[#55dff5]" />
        {index + 1}
      </label>
    </div>
  );
}

function EqEight() {
  return (
    <Device
      title="EQ Eight"
      width="w-[402px]"
      left={<DeviceIcon icon="play" label="Unfold" />}
      right={<><DeviceIcon icon="swap" label="Hot-swap" /><DeviceIcon icon="save" label="Save" /></>}
    >
      <div className="flex flex-1 gap-[2px] px-[2px] pb-[2px]">
        <div className="flex w-[40px] flex-col justify-between rounded-[3px] bg-[#929292] py-[2px]">
          <Knob label="Freq" value="3.03 kHz" arc="M7 21.200A10 10 0 1 1 22.700 10.500" needle="M13 13l9.500-2.500" />
          <Knob label="Gain" value="2.60 dB" arc="M13 3A10 10 0 0 1 17 3.900" needle="M13 13l4-9" marker />
          <Knob label="Q" value="0.71" arc="M7 21.200A10 10 0 0 1 7 5" needle="M13 13L7 5" />
        </div>
        <div className="flex flex-1 flex-col">
          <EqGraph />
          <div className="mt-[2px] flex flex-1 gap-[2px]">
            {filterShapes.map((_, i) => <FilterTab key={i} index={i} />)}
          </div>
        </div>
        <div className="flex w-[43px] flex-col justify-between rounded-[3px] bg-[#929292] px-[2px] py-1 text-[9px] leading-[12px] font-medium text-[#222]">
          <div className="flex justify-between">
            <Toggle className="w-[18px]" label="Audition">
              <svg width="9" height="8" viewBox="0 0 9 8"><path d="M2.5 7A3 3 0 1 1 6.500 7" fill="none" stroke="#222" /><path d="M1.5 5h1.500v3H1.500zM6 5h1.500v3H6z" /></svg>
            </Toggle>
            <Toggle className="w-[18px]" tone="on" label="Analyze">
              <svg width="12" height="8" viewBox="0 0 12 8"><path d="M1 8V5M3 8V3M5 8V4M7 8V1M9 8V5M11 8V2" stroke="#6b4a00" /></svg>
            </Toggle>
          </div>
          <div>Mode<Chooser label="Mode" value="Stereo" className="font-normal" /></div>
          <div>Edit<Toggle className="w-full font-normal">A</Toggle></div>
          <div className="whitespace-nowrap">Adapt. Q<Toggle className="w-full font-normal" tone="on">On</Toggle></div>
          <div>Scale<Field label="Scale" value="100 %" level={75} className="font-normal" /></div>
          <div>Gain<Field label="Output gain" value="0.00 dB" level={50} className="font-normal" /></div>
        </div>
      </div>
    </Device>
  );
}

function PluginPad() {
  const slot = 'h-[11px] flex-1 border border-[#5e5e5e] pl-px text-left text-[9px] leading-[9px] text-[#222]';
  return (
    <div className="flex flex-1 flex-col gap-1 px-1 pt-[4px] pb-1">
      <div className="flex items-center gap-[3px]">
        <DeviceIcon icon="folder" label="Load preset" />
        <DeviceIcon icon="save" label="Save preset" />
        <button className={slot}>Default</button>
      </div>
      <div className="flex flex-1 items-end rounded-[3px] bg-[#191919]">
        <span className="h-[11px] w-[11px] rounded-full border-2 border-[#ffad00]" />
      </div>
      <div className="flex gap-[3px]">
        <button className={slot}>none</button>
        <button className={slot}>none</button>
      </div>
    </div>
  );
}

function SpectrumRow({ label, children }: { label: string; children: ReactNode }) {
  return (
    <div className="flex items-center">
      <span className="w-[34px] whitespace-nowrap">{label}</span>
      <div className="flex flex-1 gap-[2px]">{children}</div>
    </div>
  );
}

function Spectrum() {
  const rows = [20.5, 40.5, 60.5, 81.5, 101.5, 121.5];
  return (
    <Device
      title="Spectrum"
      width="w-[338px]"
      left={<DeviceIcon icon="play" label="Unfold" />}
      right={<><DeviceIcon icon="swap" label="Hot-swap" /><DeviceIcon icon="save" label="Save" /></>}
    >
      <div className="flex flex-1 gap-1 bg-[#929292] px-1 pt-[4px] pb-[3px]">
        <div className="flex w-[95px] flex-col justify-between pt-[3px] pb-px text-[9px] leading-[11px] text-[#222]">
          <SpectrumRow label="Block"><Chooser label="Block" value="8192" className="w-full" /></SpectrumRow>
          <hr className="border-[#6a6a6a]" />
          <SpectrumRow label="Channel">
            <Toggle className="w-[11px]">L</Toggle>
            <Toggle className="w-[11px]">R</Toggle>
            <Toggle className="w-[19px]" tone="on">L+R</Toggle>
          </SpectrumRow>
          <hr className="border-[#6a6a6a]" />
          <SpectrumRow label="Refresh"><Field label="Refresh" value="60.0 ms" level={12} className="w-10" /></SpectrumRow>
          <SpectrumRow label="Avg"><Field label="Avg" value="1" className="w-10" /></SpectrumRow>
          <hr className="border-[#6a6a6a]" />
          <SpectrumRow label="Graph">
            <Toggle className="w-8" tone="on">Line</Toggle>
            <Toggle className="flex-1" tone="on">Max</Toggle>
          </SpectrumRow>
          <SpectrumRow label="Scale X">
            <Toggle className="flex-1">Lin</Toggle>
            <Toggle className="flex-1" tone="on">Log</Toggle>
            <Toggle className="flex-1">ST</Toggle>
          </SpectrumRow>
          <div className="flex items-center">
            <Toggle className="mr-[5px] w-[29px]" tone="on">Range</Toggle>
            <Field label="Range top" value="0" level={85} className="flex-1" />
            <span className="w-[5px] text-center leading-[9px]">-</span>
            <Field label="Range bottom" value="-40" level={85} className="flex-1" />
          </div>
        </div>
        <svg className="block h-[136px] min-w-0 flex-1 rounded-[3px] bg-[#191919]" viewBox="0 0 231 136" preserveAspectRatio="none">
          <path d={logLines(69, 69, 231, 30).map((x) => `M${x} 9v127`).join('')} stroke="#303030" />
          <path d="M69.5 10v126M138.5 10v126M207.5 10v126" stroke="#505050" />
          <path d={rows.map((y) => `M18 ${y}h213`).join('')} stroke="#303030" />
          <g fill="#8a8a8a" fontSize="9" fontWeight="500">
            {rows.map((y, i) => (
              <text key={y} x="16" y={y + 3} textAnchor="end">{`-${(i + 1) * 6}`}</text>
            ))}
            <text x="69" y="8" textAnchor="middle">100</text>
            <text x="138" y="8" textAnchor="middle">1k</text>
            <text x="207" y="8" textAnchor="middle">10k</text>
          </g>
        </svg>
      </div>
    </Device>
  );
}

function Devices() {
  const pluginLeft = <><DeviceIcon icon="fold" label="Fold" /><DeviceIcon icon="wrench" label="Edit plug-in" /></>;
  return (
    <div className="mx-[7px] mt-[7px] flex rounded-[5px] bg-[#505050] p-[3px]">
      <DeviceMeter />
      <EqEight />
      <DeviceMeter />
      <Device title="Ozone 9 Elem..." width="w-[125px]" left={pluginLeft} right={<DeviceIcon icon="swap" label="Hot-swap" />}>
        <div className="flex flex-1 bg-[#929292]"><PluginPad /></div>
      </Device>
      <DeviceMeter />
      <Spectrum />
      <DeviceMeter />
      <Device title="Youlean Loudness Meter 2" width="w-[199px]" left={pluginLeft} right={<DeviceIcon icon="swap" label="Hot-swap" />}>
        <div className="flex flex-1 bg-[#929292]">
          <div className="flex w-[71px] flex-col justify-between py-[4px] pr-[6px] pl-1 text-[9px] leading-[10px] text-[#222]">
            <div className="flex flex-col gap-[2px]">
              <span>Sidechain</span>
              <Chooser label="Sidechain" value="No Input" />
              <Blank />
            </div>
            <Knob label="Gain" value="0.00 dB" grey arc="M7 21.200A10 10 0 0 1 8 4.400" needle="M13 13L8.500 4.500" />
            <Knob label="Mix" value="100 %" grey arc="M7 21.200A10 10 0 1 1 19 21.200" needle="M13 13l5 9" />
            <Toggle className="w-full"><span className="text-[#666]">Mute</span></Toggle>
          </div>
          <div className="relative my-1 w-px bg-[#6e6e6e]">
            <svg className="absolute top-[64px] left-0" width="3" height="6" viewBox="0 0 3 6"><path d="M0 0l3 3-3 3z" fill="#444" /></svg>
          </div>
          <PluginPad />
        </div>
      </Device>
      <DeviceMeter />
      <div className="flex flex-1 items-center justify-center rounded-r-[3px] bg-[#8e8e8e] text-[9px] text-[#1c1c1c]">
        Ziehen Sie Audio-Effekte hierhin
      </div>
    </div>
  );
}

// miniature of the device chain above
function ChainThumb() {
  return (
    <svg width="97" height="13" viewBox="0 0 97 13">
      <path d="M0 0h34v13H0zM35 0h12v13H35zM48 0h30v13H48zM79 0h17v13H79z" fill="#a2a2a2" />
      <path d="M4 1h26v9H4zM36 3h10v9H36zM57 2h20v10H57zM86 3h9v9h-9z" fill="#151515" />
      <path d="M1 2h2M1 5h2M1 8h2M5 11.500h3M10 11.500h3M15 11.500h3M20 11.500h3M81 4h3M81 7h3" stroke="#666" />
      <path d="M5 5.500h17l7-1.500" stroke="#3d8a94" fill="none" strokeWidth=".8" />
      <path d="M8 5.500h1M14 5.500h1M19 5.500h1M23 4.500h1M31 2h2M31 7h2M50 8h5M50 11h3M36 1h1M49 1h1M80 1h1" stroke="#e0a020" />
      <path d="M31 9.500h2M31 11.500h2M53 11h3" stroke="#55c4d8" />
    </svg>
  );
}

function StatusBar() {
  return (
    <footer className="flex h-8 items-start px-[7px]">
      <button aria-label="Preview" className="mt-2 mr-[7px] flex h-4 w-4 items-center justify-center rounded-full bg-[#505050]">
        <svg width="10" height="10" viewBox="0 0 10 10"><path d="M1 0l9 5-9 5z" fill="#aaaaaa" /></svg>
      </button>
      <div className="mt-[7px] h-[19px] flex-1 rounded-[3px] border-2 border-[#505050] bg-[#8e8e8e] pl-[5px] text-[9px] leading-[15px] text-[#1c1c1c]">
        Einfüge-Marker 29.1.1 (Zeit: 0:46:993)
      </div>
      <div className="mt-[7px] mr-[7px] ml-[6px] h-[19px] w-[172px] rounded-[3px] border-2 border-[#505050] bg-[#8e8e8e]" />
      <div className="flex h-[25px] w-[134px] items-center bg-[#505050] rounded-b-[4px] pt-[6px] pl-1 text-[9px] font-bold text-[#161616]">
        <span className="w-[31px]">Master</span>
        <ChainThumb />
      </div>
      <button aria-label="Hide device view" className="mt-2 ml-[6px] flex h-4 w-4 items-center justify-center rounded-full bg-[#505050]">
        <svg width="10" height="10" viewBox="0 0 10 10"><path d="M5 0l5 9H0z" fill="#aaaaaa" /></svg>
      </button>
    </footer>
  );
}

export default function App() {
  return (
    <div className="min-h-screen overflow-hidden bg-[#6e6e6e] font-[Roboto,sans-serif] text-[9px] leading-none">
      <TopBar />
      <Arrangement />
      <Devices />
      <StatusBar />
    </div>
  );
}
